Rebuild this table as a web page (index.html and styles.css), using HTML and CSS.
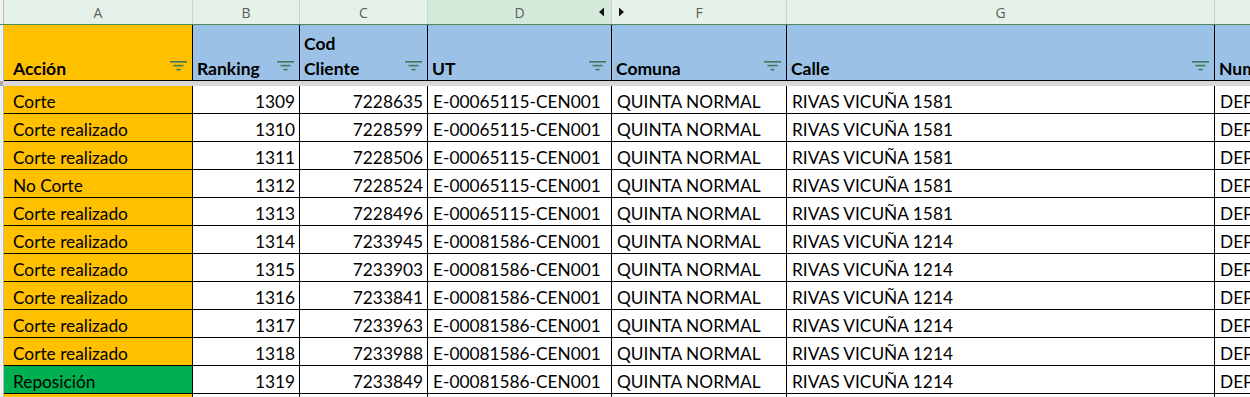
FILE: index.html
```html
<!DOCTYPE html>
<html lang="es">
<head>
<meta charset="utf-8">
<title>Hoja de cortes</title>
<link rel="stylesheet" href="styles.css">
</head>
<body>
<div class="sheet">
  <div class="row colhead">
    <div class="strip"></div>
    <div class="ch">A</div>
    <div class="ch">B</div>
    <div class="ch">C</div>
    <div class="ch ch-sel"><span class="sp"></span><span class="lt">D</span><svg class="arr" width="16" height="10" viewBox="0 0 16 10"><polygon points="4,5 9,0.5 9,9.5" fill="#111"/></svg></div>
    <div class="ch"><svg class="arr" width="16" height="10" viewBox="0 0 16 10"><polygon points="12,5 7,0.5 7,9.5" fill="#111"/></svg><span class="lt">F</span><span class="sp"></span></div>
    <div class="ch">G</div>
    <div class="ch"></div>
  </div>

  <div class="row head">
    <div class="strip"></div>
    <div class="hc orange indent"><span>Acción</span><svg class="flt" width="17" height="10" viewBox="0 0 17 10"><rect x="0" y="0" width="17" height="1.6"/><rect x="3.5" y="3.8" width="10" height="1.6"/><rect x="6.5" y="7.8" width="4" height="1.6"/></svg></div>
    <div class="hc blue"><span>Ranking</span><svg class="flt" width="17" height="10" viewBox="0 0 17 10"><rect x="0" y="0" width="17" height="1.6"/><rect x="3.5" y="3.8" width="10" height="1.6"/><rect x="6.5" y="7.8" width="4" height="1.6"/></svg></div>
    <div class="hc blue"><span>Cod<br>Cliente</span><svg class="flt" width="17" height="10" viewBox="0 0 17 10"><rect x="0" y="0" width="17" height="1.6"/><rect x="3.5" y="3.8" width="10" height="1.6"/><rect x="6.5" y="7.8" width="4" height="1.6"/></svg></div>
    <div class="hc blue"><span>UT</span><svg class="flt" width="17" height="10" viewBox="0 0 17 10"><rect x="0" y="0" width="17" height="1.6"/><rect x="3.5" y="3.8" width="10" height="1.6"/><rect x="6.5" y="7.8" width="4" height="1.6"/></svg></div>
    <div class="hc blue"><span>Comuna</span><svg class="flt" width="17" height="10" viewBox="0 0 17 10"><rect x="0" y="0" width="17" height="1.6"/><rect x="3.5" y="3.8" width="10" height="1.6"/><rect x="6.5" y="7.8" width="4" height="1.6"/></svg></div>
    <div class="hc blue"><span>Calle</span><svg class="flt" width="17" height="10" viewBox="0 0 17 10"><rect x="0" y="0" width="17" height="1.6"/><rect x="3.5" y="3.8" width="10" height="1.6"/><rect x="6.5" y="7.8" width="4" height="1.6"/></svg></div>
    <div class="hc blue"><span>Numero</span></div>
  </div>

  <div class="freeze"></div>

  <div class="row data"><div class="strip"></div><div class="c orange indent">Corte</div><div class="c num">1309</div><div class="c num">7228635</div><div class="c">E-00065115-CEN001</div><div class="c">QUINTA NORMAL</div><div class="c">RIVAS VICUÑA 1581</div><div class="c">DEPTO</div></div>
  <div class="row data"><div class="strip"></div><div class="c orange indent">Corte realizado</div><div class="c num">1310</div><div class="c num">7228599</div><div class="c">E-00065115-CEN001</div><div class="c">QUINTA NORMAL</div><div class="c">RIVAS VICUÑA 1581</div><div class="c">DEPTO</div></div>
  <div class="row data"><div class="strip"></div><div class="c orange indent">Corte realizado</div><div class="c num">1311</div><div class="c num">7228506</div><div class="c">E-00065115-CEN001</div><div class="c">QUINTA NORMAL</div><div class="c">RIVAS VICUÑA 1581</div><div class="c">DEPTO</div></div>
  <div class="row data"><div class="strip"></div><div class="c orange indent">No Corte</div><div class="c num">1312</div><div class="c num">7228524</div><div class="c">E-00065115-CEN001</div><div class="c">QUINTA NORMAL</div><div class="c">RIVAS VICUÑA 1581</div><div class="c">DEPTO</div></div>
  <div class="row data"><div class="strip"></div><div class="c orange indent">Corte realizado</div><div class="c num">1313</div><div class="c num">7228496</div><div class="c">E-00065115-CEN001</div><div class="c">QUINTA NORMAL</div><div class="c">RIVAS VICUÑA 1581</div><div class="c">DEPTO</div></div>
  <div class="row data"><div class="strip"></div><div class="c orange indent">Corte realizado</div><div class="c num">1314</div><div class="c num">7233945</div><div class="c">E-00081586-CEN001</div><div class="c">QUINTA NORMAL</div><div class="c">RIVAS VICUÑA 1214</div><div class="c">DEPTO</div></div>
  <div class="row data"><div class="strip"></div><div class="c orange indent">Corte realizado</div><div class="c num">1315</div><div class="c num">7233903</div><div class="c">E-00081586-CEN001</div><div class="c">QUINTA NORMAL</div><div class="c">RIVAS VICUÑA 1214</div><div class="c">DEPTO</div></div>
  <div class="row data"><div class="strip"></div><div class="c orange indent">Corte realizado</div><div class="c num">1316</div><div class="c num">7233841</div><div class="c">E-00081586-CEN001</div><div class="c">QUINTA NORMAL</div><div class="c">RIVAS VICUÑA 1214</div><div class="c">DEPTO</div></div>
  <div class="row data"><div class="strip"></div><div class="c orange indent">Corte realizado</div><div class="c num">1317</div><div class="c num">7233963</div><div class="c">E-00081586-CEN001</div><div class="c">QUINTA NORMAL</div><div class="c">RIVAS VICUÑA 1214</div><div class="c">DEPTO</div></div>
  <div class="row data"><div class="strip"></div><div class="c orange indent">Corte realizado</div><div class="c num">1318</div><div class="c num">7233988</div><div class="c">E-00081586-CEN001</div><div class="c">QUINTA NORMAL</div><div class="c">RIVAS VICUÑA 1214</div><div class="c">DEPTO</div></div>
  <div class="row data"><div class="strip"></div><div class="c green indent">Reposición</div><div class="c num">1319</div><div class="c num">7233849</div><div class="c">E-00081586-CEN001</div><div class="c">QUINTA NORMAL</div><div class="c">RIVAS VICUÑA 1214</div><div class="c">DEPTO</div></div>
  <div class="row data"><div class="strip"></div><div class="c orange indent"></div><div class="c num"></div><div class="c num"></div><div class="c"></div><div class="c"></div><div class="c"></div><div class="c"></div></div>
</div>
</body>
</html>
```

FILE: styles.css
```css
* { box-sizing: border-box; }
html, body { margin: 0; padding: 0; background: #ffffff; }
body { width: 1250px; height: 397px; overflow: hidden; font-family: Lato, "Open Sans", sans-serif; color: #000; }

.sheet { width: 1250px; }

.row {
  display: grid;
  grid-template-columns: 4px 189px 107px 128px 184px 175px 428px 200px;
}

.strip { background: #f1f1f1; border-right: 1px solid #b9b9b9; }

/* column letters */
.colhead { height: 25px; background: #e6f2e9; border-bottom: 1px solid #4f8a5b; }
.ch {
  display: flex; align-items: center; justify-content: center;
  border-right: 1px solid #c9d4cc;
  font-family: "Open Sans", sans-serif; font-size: 14px; color: #5c5c5c;
}
.ch-sel { background: #d3eada; }
.ch .lt { flex: 1; text-align: center; }
.ch .sp { width: 16px; }
.ch .arr { display: block; }

/* header row */
.head { height: 56px; }
.hc {
  display: flex; align-items: flex-end; justify-content: space-between;
  border-right: 1px solid #000; border-bottom: 1px solid #000;
  padding-left: 4px; font-weight: 700; font-size: 17.5px; line-height: 25px;
  overflow: hidden; white-space: nowrap;
}
.hc > span { position: relative; top: 1px; }
.hc .flt { fill: #3c7a5c; margin: 0 5px 9px 0; flex: none; }

.freeze { height: 5px; background: #d8d8d8; border-left: 3px solid #a9a9a9; }

/* data rows */
.data { height: 28px; }
.c {
  display: flex; align-items: flex-end;
  border-right: 1px solid #000; border-bottom: 1px solid #000;
  padding: 0 4px 0 5px; font-size: 17.3px; line-height: 22px;
  white-space: nowrap; overflow: hidden;
}
.num { justify-content: flex-end; }
.indent { padding-left: 9px; }

.orange { background: #ffc000; }
.green { background: #00b050; }
.blue { background: #9bc2e6; }
```
